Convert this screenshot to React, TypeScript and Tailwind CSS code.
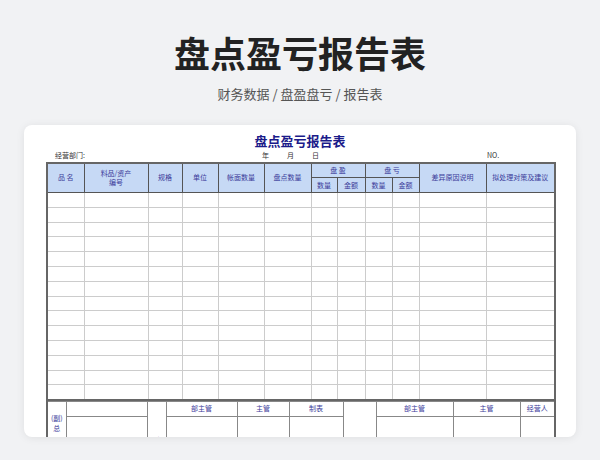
const F = { fontFamily: '"Noto Sans CJK SC", "Liberation Sans", sans-serif' };
const cols = [37, 64, 34, 36, 46, 47, 26, 28, 27, 27, 67, 69];
const b = 'border border-[#888]';
const h = 'border border-[#555] bg-[#c6d9f5] text-[#3b3b9a] text-[7px] font-normal text-center leading-[9px] p-0';

export default function App() {
  return (
    <div className="w-[600px] h-[460px] bg-[#f1f2f4] overflow-hidden flex flex-col items-center" style={F}>
      <div className="mt-[30px] text-[36px] font-bold text-[#222] leading-[44px]">盘点盈亏报告表</div>
      <div className="mt-[10px] text-[13px] text-[#555]">财务数据 / 盘盈盘亏 / 报告表</div>
      <div className="mt-[21px] w-[552px] h-[312px] bg-white rounded-lg shadow-[0_1px_8px_rgba(0,0,0,0.08)] overflow-hidden px-[22px]">
        <div className="text-center text-[13px] font-bold text-[#1b1b8a] mt-[7px] leading-[18px]">盘点盈亏报告表</div>
        <div className="flex text-[7px] text-[#333] h-[12px] items-center leading-none">
          <span className="ml-[9px] w-[207px]">经营部门:</span>
          <span className="w-[25px]">年</span>
          <span className="w-[25px]">月</span>
          <span className="w-[175px]">日</span>
          <span>NO.</span>
        </div>
        <table className="border-collapse table-fixed w-[508px] border-2 border-[#666]">
          <colgroup>{cols.map((w, i) => <col key={i} style={{ width: w }} />)}</colgroup>
          <thead>
            <tr className="h-[15px]">
              <th rowSpan={2} className={h}>品 名</th>
              <th rowSpan={2} className={h}>料品/资产<br />编号</th>
              <th rowSpan={2} className={h}>规格</th>
              <th rowSpan={2} className={h}>单位</th>
              <th rowSpan={2} className={h}>帐面数量</th>
              <th rowSpan={2} className={h}>盘点数量</th>
              <th colSpan={2} className={h}>盘 盈</th>
              <th colSpan={2} className={h}>盘 亏</th>
              <th rowSpan={2} className={h}>差异原因说明</th>
              <th rowSpan={2} className={h}>拟处理对策及建议</th>
            </tr>
            <tr className="h-[15px]">
              <th className={h}>数量</th><th className={h}>金额</th>
              <th className={h}>数量</th><th className={h}>金额</th>
            </tr>
          </thead>
          <tbody>
            {Array.from({ length: 14 }).map((_, r) => (
              <tr key={r} className="h-[14.8px]">
                {cols.map((_, c) => <td key={c} className="border border-[#ccc] p-0" />)}
              </tr>
            ))}
          </tbody>
        </table>
        <table className="border-collapse table-fixed w-[508px] border-2 border-t-0 border-[#666] text-[7px] text-[#3b3b9a] text-center">
          <colgroup>
            {[19, 81, 19, 71, 52, 54, 12, 21, 77, 67, 35].map((w, i) => <col key={i} style={{ width: w }} />)}
          </colgroup>
          <tbody>
            <tr className="h-[15px]">
              <td rowSpan={2} className={b}>(副)<br />总</td>
              <td className={b}></td>
              <td rowSpan={2} className={`${b} align-bottom`}>财</td>
              <td className={b}>部主管</td><td className={b}>主管</td><td className={b}>制表</td>
              <td rowSpan={2} colSpan={2} className={`${b} align-bottom text-right pr-[3px]`}>经</td>
              <td className={b}>部主管</td><td className={b}>主管</td><td className={b}>经营人</td>
            </tr>
            <tr className="h-[30px]">
              <td className={b}></td><td className={b}></td><td className={b}></td><td className={b}></td>
              <td className={b}></td><td className={b}></td><td className={b}></td>
            </tr>
          </tbody>
        </table>
      </div>
    </div>
  );
}
